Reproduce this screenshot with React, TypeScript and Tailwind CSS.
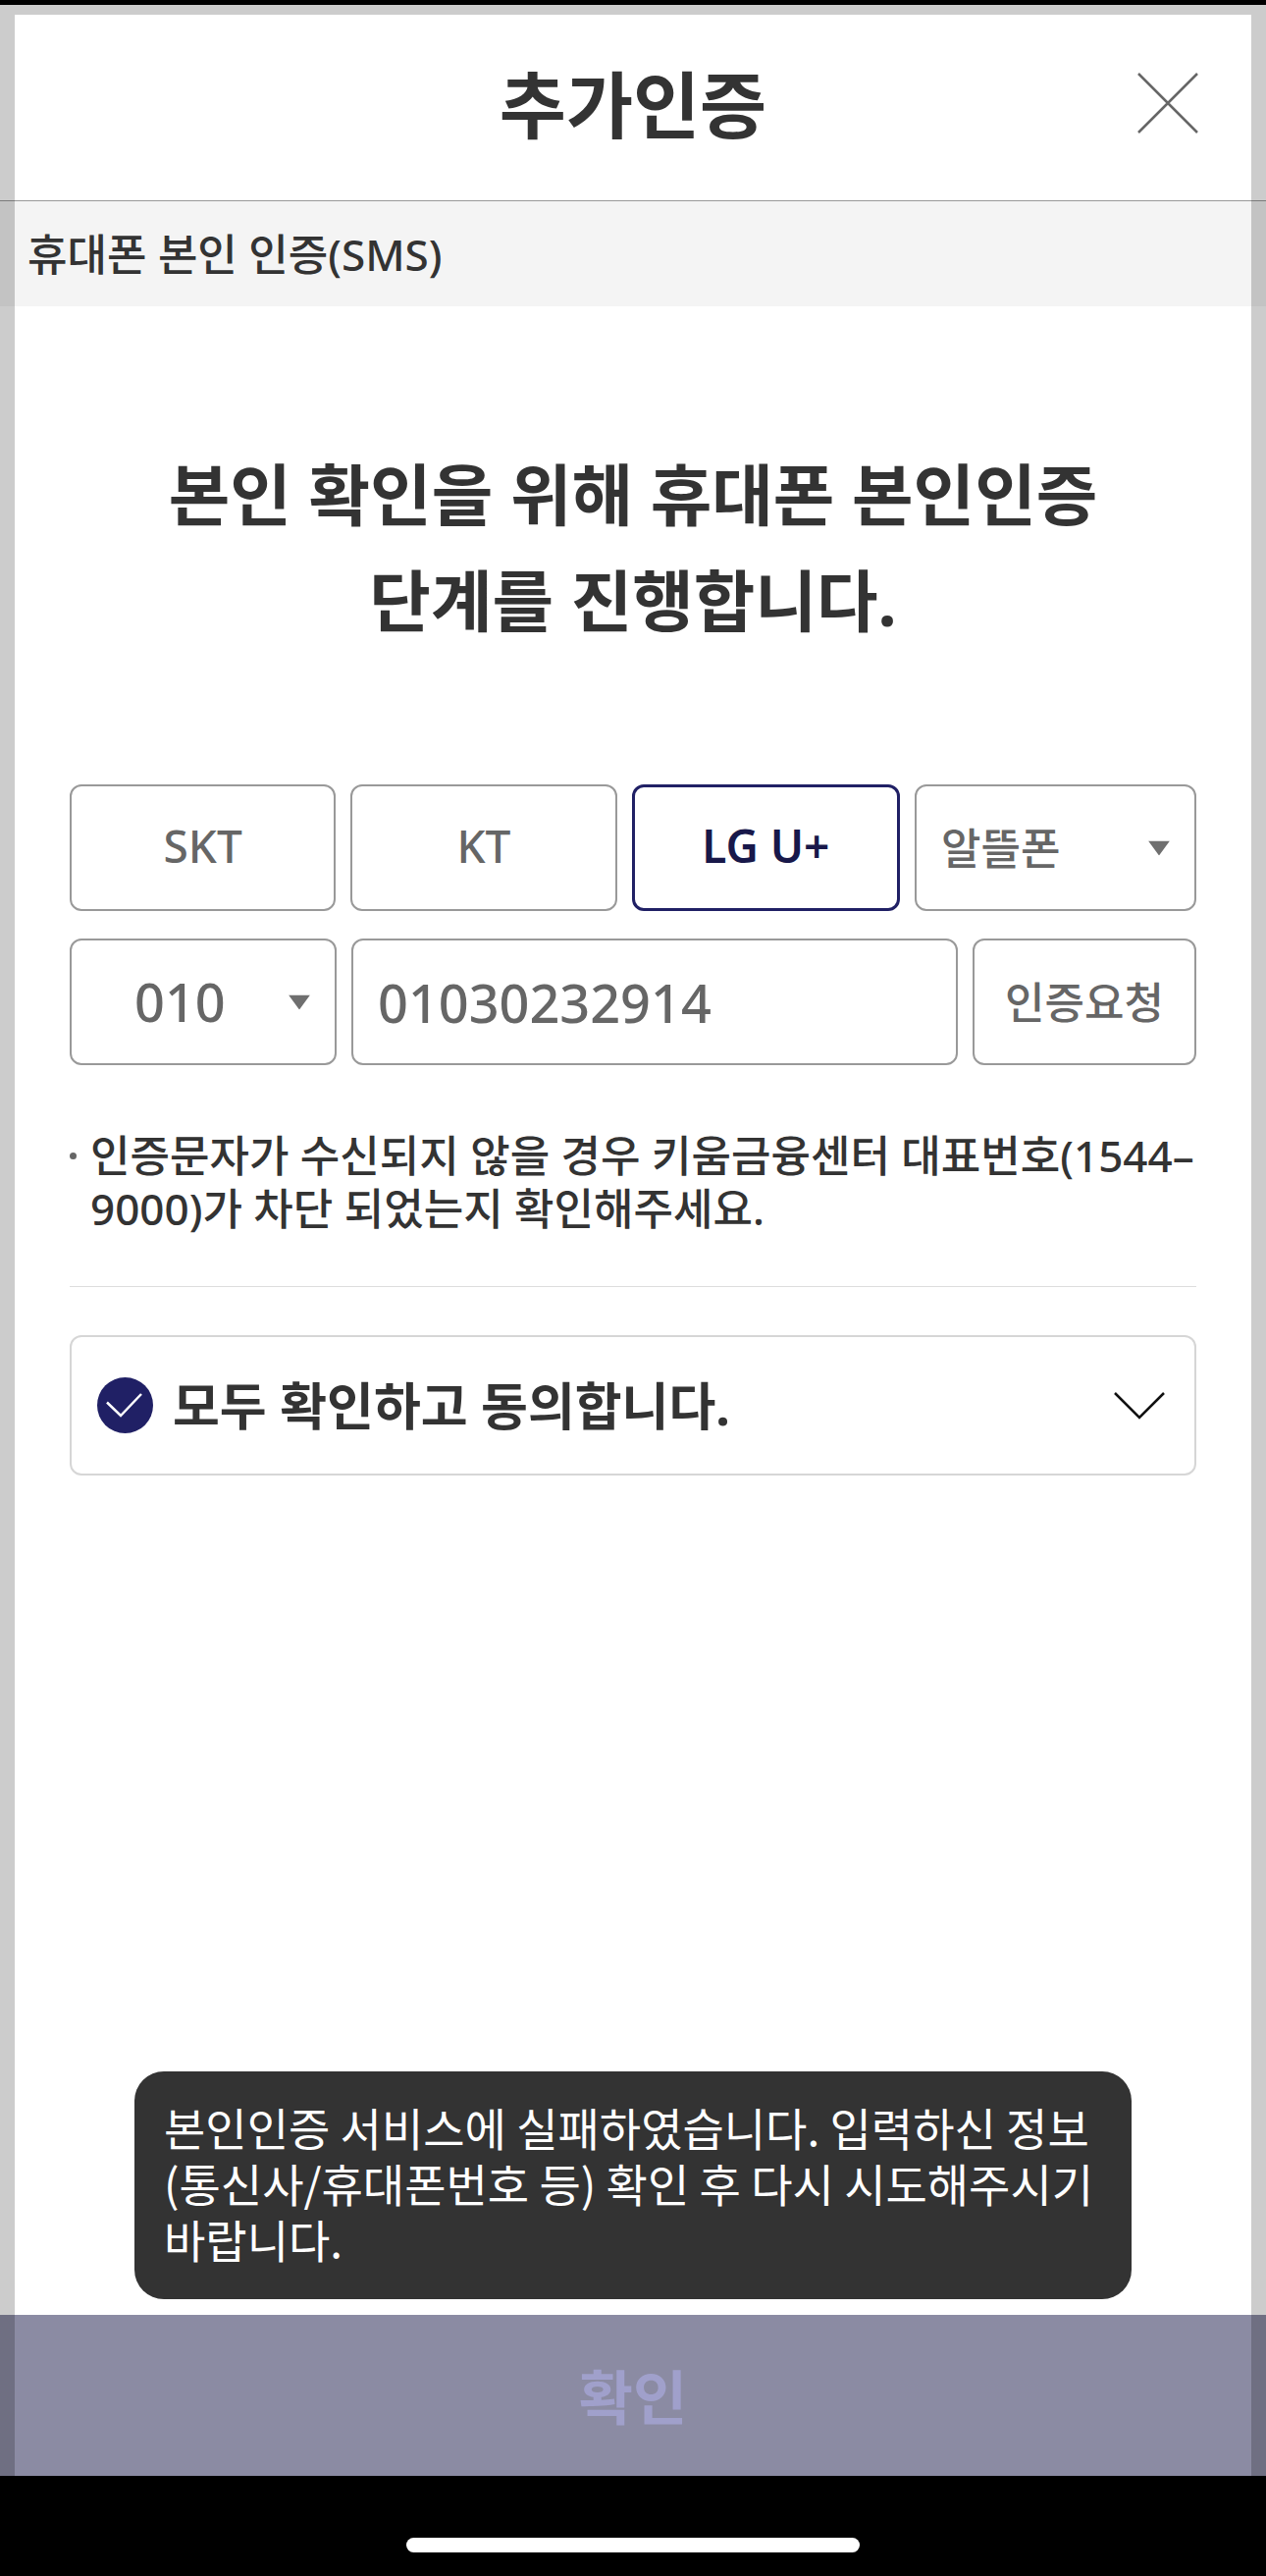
import React, { useState } from 'react';

const carriers = ['SKT', 'KT', 'LG U+'];

const fieldBase = 'h-[129px] rounded-xl border-2 border-[#999] bg-white font-medium text-[#666]';

const Caret: React.FC = () => (
  <svg className="pointer-events-none absolute right-[27px] top-1/2 -translate-y-1/2" width="22" height="15" viewBox="0 0 22 15">
    <path d="M0 0H22L11 15Z" fill="#6f6f6f" />
  </svg>
);

const App: React.FC = () => {
  const [carrier, setCarrier] = useState<string>('LG U+');
  const [prefix, setPrefix] = useState<string>('010');
  const [phone, setPhone] = useState<string>('01030232914');
  const [agreed, setAgreed] = useState<boolean>(true);

  return (
    <div className="flex min-h-screen flex-col bg-black pt-[5px] font-['Noto_Sans','Noto_Sans_CJK_KR',sans-serif] text-[#333]">
      <div className="relative flex flex-1 flex-col bg-white">
        <header className="relative flex h-[200px] items-center justify-center border-b border-[#999] pt-1">
          <h1 className="text-[74px] leading-[100px] font-bold">추가인증</h1>
          <button type="button" aria-label="닫기" className="absolute right-[68px] top-[68px]">
            <svg width="64" height="64" viewBox="0 0 64 64" fill="none" stroke="#666" strokeWidth="2.5">
              <path d="M2 2L62 62M62 2L2 62" />
            </svg>
          </button>
        </header>

        <div className="flex h-[107px] items-center bg-[#f4f4f4] px-7">
          <p className="text-[44px] leading-[54px] font-medium">휴대폰 본인 인증(SMS)</p>
        </div>

        <main className="flex-1 px-[71px] pt-[138px] pb-[280px]">
          <h2 className="text-center text-[68px] leading-[108px] font-bold">
            본인 확인을 위해 휴대폰 본인인증
            <br />
            단계를 진행합니다.
          </h2>

          <form className="mt-[133px]" onSubmit={(e) => e.preventDefault()}>
            <div className="flex gap-[15px]">
              {carriers.map((name) => (
                <button
                  key={name}
                  type="button"
                  aria-pressed={carrier === name}
                  onClick={() => setCarrier(name)}
                  className={
                    carrier === name
                      ? 'h-[129px] flex-1 rounded-xl border-3 border-[#202065] bg-white pb-1 text-[46px] font-semibold text-[#18184a]'
                      : `${fieldBase} flex-1 pb-1 text-[46px]`
                  }
                >
                  {name}
                </button>
              ))}
              <div className="relative w-1/4">
                <select aria-label="알뜰폰 통신사" className={`${fieldBase} w-full appearance-none px-[25px] text-[44px]`}>
                  <option>알뜰폰</option>
                </select>
                <Caret />
              </div>
            </div>

            <div className="mt-7 flex gap-[15px]">
              <div className="relative w-[272px]">
                <select
                  aria-label="휴대폰 앞자리"
                  value={prefix}
                  onChange={(e) => setPrefix(e.target.value)}
                  className={`${fieldBase} w-full appearance-none pl-16 text-[54px]`}
                >
                  <option>010</option>
                  <option>011</option>
                </select>
                <Caret />
              </div>
              <input
                type="tel"
                aria-label="휴대폰 번호"
                value={phone}
                onChange={(e) => setPhone(e.target.value)}
                className={`${fieldBase} min-w-0 flex-1 px-[25px] text-[54px]`}
              />
              <button type="submit" className={`${fieldBase} w-[228px] text-[44px]`}>
                인증요청
              </button>
            </div>
          </form>

          <ul className="mt-[65px]">
            <li className="flex gap-3.5 text-[44px] leading-[54px] font-medium">
              <span className="mt-6 size-[7px] shrink-0 rounded-full bg-[#666]" />
              <span className="break-keep">인증문자가 수신되지 않을 경우 키움금융센터 대표번호(1544–9000)가 차단 되었는지 확인해주세요.</span>
            </li>
          </ul>

          <hr className="mt-[52px] border-[#ddd]" />

          <div className="mt-[49px] flex h-[143px] items-center justify-between rounded-xl border-2 border-[#d6d6d6] pr-[30px] pl-[26px]">
            <label className="flex items-center gap-5 text-[52px] leading-[70px] font-bold">
              <span className="relative size-[57px]">
                <input
                  type="checkbox"
                  checked={agreed}
                  onChange={(e) => setAgreed(e.target.checked)}
                  className="block size-full appearance-none rounded-full bg-[#ccc] checked:bg-[#202065]"
                />
                <svg className="pointer-events-none absolute inset-0" viewBox="0 0 57 57" fill="none" stroke="#fff" strokeWidth="2.5">
                  <path d="M10 25.5L24 39L45 17" />
                </svg>
              </span>
              모두 확인하고 동의합니다.
            </label>
            <button type="button" aria-label="약관 펼치기">
              <svg width="52" height="30" viewBox="0 0 52 30" fill="none" stroke="#111" strokeWidth="2.5">
                <path d="M1 2L26 27L51 2" />
              </svg>
            </button>
          </div>
        </main>

        <footer className="relative">
          <div
            role="alert"
            className="absolute inset-x-[137px] bottom-full mb-4 rounded-[30px] bg-[#333] px-[30px] pt-7 pb-[33px] font-['Noto_Sans_CJK_KR',sans-serif] text-[46px] leading-[57px] text-white"
          >
            본인인증 서비스에 실패하였습니다. 입력하신 정보
            <br />
            (통신사/휴대폰번호 등) 확인 후 다시 시도해주시기
            <br />
            바랍니다.
          </div>
          <button type="submit" className="block h-[164px] w-full bg-[#8b8ba3] pt-1 text-[60px] font-bold text-[#a0a0cb]">
            확인
          </button>
        </footer>

        {/* dimmed edge of the dialog */}
        <div className="pointer-events-none absolute inset-0 border-x-[15px] border-t-10 border-black/20" />
      </div>

      <div className="flex h-[102px] justify-center pt-[63px]">
        <div className="h-[15px] w-[462px] rounded-full bg-white" />
      </div>
    </div>
  );
};

export default App;
